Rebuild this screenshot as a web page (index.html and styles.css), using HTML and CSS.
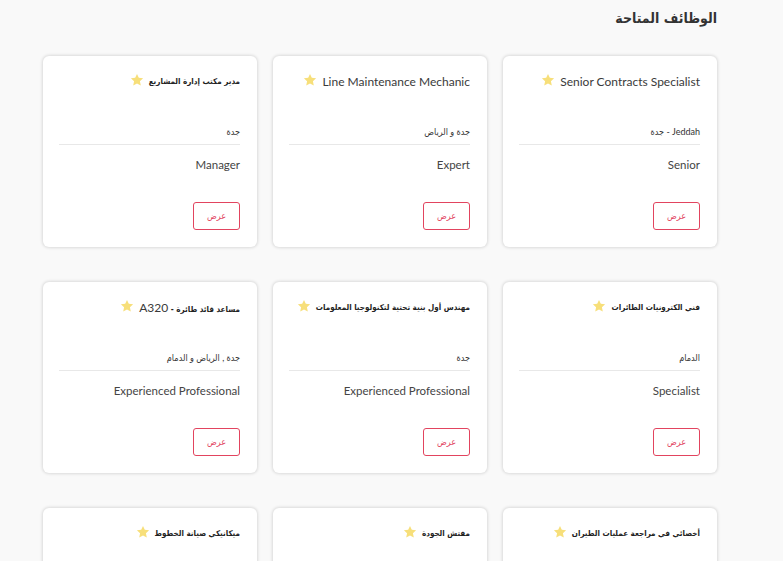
FILE: index.html
```html
<!DOCTYPE html>
<html lang="ar" dir="rtl">
<head>
    <meta charset="utf-8">
    <title>الوظائف المتاحة</title>
    <link rel="stylesheet" href="styles.css">
</head>
<body>
    <div class="jobs-container">
        <h2 class="jobs-title">الوظائف المتاحة</h2>

        <div class="jobs-grid">
            <div class="job-card">
                <div class="job-name"><span>Senior Contracts Specialist</span> <svg class="star" viewBox="0 0 24 24"><polygon points="12,1.5 15.1,8.3 22.5,9.1 17,14.1 18.5,21.5 12,17.8 5.5,21.5 7,14.1 1.5,9.1 8.9,8.3"/></svg></div>
                <div class="job-location">Jeddah - جدة</div>
                <div class="job-level">Senior</div>
                <a href="#" class="view-button">عرض</a>
            </div>
            <div class="job-card">
                <div class="job-name"><span>Line Maintenance Mechanic</span> <svg class="star" viewBox="0 0 24 24"><polygon points="12,1.5 15.1,8.3 22.5,9.1 17,14.1 18.5,21.5 12,17.8 5.5,21.5 7,14.1 1.5,9.1 8.9,8.3"/></svg></div>
                <div class="job-location">جدة و الرياض</div>
                <div class="job-level">Expert</div>
                <a href="#" class="view-button">عرض</a>
            </div>
            <div class="job-card">
                <div class="job-name ar"><span>مدير مكتب إدارة المشاريع</span> <svg class="star" viewBox="0 0 24 24"><polygon points="12,1.5 15.1,8.3 22.5,9.1 17,14.1 18.5,21.5 12,17.8 5.5,21.5 7,14.1 1.5,9.1 8.9,8.3"/></svg></div>
                <div class="job-location">جدة</div>
                <div class="job-level">Manager</div>
                <a href="#" class="view-button">عرض</a>
            </div>

            <div class="job-card">
                <div class="job-name ar"><span>فني الكترونيات الطائرات</span> <svg class="star" viewBox="0 0 24 24"><polygon points="12,1.5 15.1,8.3 22.5,9.1 17,14.1 18.5,21.5 12,17.8 5.5,21.5 7,14.1 1.5,9.1 8.9,8.3"/></svg></div>
                <div class="job-location">الدمام</div>
                <div class="job-level">Specialist</div>
                <a href="#" class="view-button">عرض</a>
            </div>
            <div class="job-card">
                <div class="job-name ar"><span>مهندس أول بنية تحتية لتكنولوجيا المعلومات</span> <svg class="star" viewBox="0 0 24 24"><polygon points="12,1.5 15.1,8.3 22.5,9.1 17,14.1 18.5,21.5 12,17.8 5.5,21.5 7,14.1 1.5,9.1 8.9,8.3"/></svg></div>
                <div class="job-location">جدة</div>
                <div class="job-level">Experienced Professional</div>
                <a href="#" class="view-button">عرض</a>
            </div>
            <div class="job-card">
                <div class="job-name ar"><span>مساعد قائد طائرة - <span class="latin">A320</span></span> <svg class="star" viewBox="0 0 24 24"><polygon points="12,1.5 15.1,8.3 22.5,9.1 17,14.1 18.5,21.5 12,17.8 5.5,21.5 7,14.1 1.5,9.1 8.9,8.3"/></svg></div>
                <div class="job-location">جدة , الرياض و الدمام</div>
                <div class="job-level">Experienced Professional</div>
                <a href="#" class="view-button">عرض</a>
            </div>

            <div class="job-card">
                <div class="job-name ar"><span>أخصائي في مراجعة عمليات الطيران</span> <svg class="star" viewBox="0 0 24 24"><polygon points="12,1.5 15.1,8.3 22.5,9.1 17,14.1 18.5,21.5 12,17.8 5.5,21.5 7,14.1 1.5,9.1 8.9,8.3"/></svg></div>
                <div class="job-location">جدة</div>
                <div class="job-level">Specialist</div>
                <a href="#" class="view-button">عرض</a>
            </div>
            <div class="job-card">
                <div class="job-name ar"><span>مفتش الجودة</span> <svg class="star" viewBox="0 0 24 24"><polygon points="12,1.5 15.1,8.3 22.5,9.1 17,14.1 18.5,21.5 12,17.8 5.5,21.5 7,14.1 1.5,9.1 8.9,8.3"/></svg></div>
                <div class="job-location">جدة</div>
                <div class="job-level">Expert</div>
                <a href="#" class="view-button">عرض</a>
            </div>
            <div class="job-card">
                <div class="job-name ar"><span>ميكانيكي صيانة الخطوط</span> <svg class="star" viewBox="0 0 24 24"><polygon points="12,1.5 15.1,8.3 22.5,9.1 17,14.1 18.5,21.5 12,17.8 5.5,21.5 7,14.1 1.5,9.1 8.9,8.3"/></svg></div>
                <div class="job-location">جدة و الرياض</div>
                <div class="job-level">Expert</div>
                <a href="#" class="view-button">عرض</a>
            </div>
        </div>
    </div>
</body>
</html>
```

FILE: styles.css
```css
body {
    margin: 0;
    font-family: "Lato", "DejaVu Sans Condensed", "DejaVu Sans", sans-serif;
    background-color: #f9f9f9;
    color: #333;
}

.jobs-container {
    padding: 8px 66px 0 43px;
}

.jobs-title {
    margin: 0 0 28px 0;
    font-family: "DejaVu Sans Condensed", "DejaVu Sans", sans-serif;
    font-size: 14px;
    line-height: 20px;
    font-weight: bold;
    color: #333;
}

.jobs-grid {
    display: grid;
    grid-template-columns: repeat(3, minmax(0, 1fr));
    column-gap: 16px;
    row-gap: 35px;
}

.job-card {
    display: flex;
    flex-direction: column;
    align-items: flex-start;
    height: 191px;
    box-sizing: border-box;
    padding: 17px 17px 17px 16px;
    background-color: #fff;
    border-radius: 6px;
    box-shadow: 0 0 3px 1px rgba(0, 0, 0, 0.12);
}

.job-name {
    display: flex;
    align-items: center;
    gap: 5px;
    height: 16px;
    white-space: nowrap;
    font-size: 12px;
    color: #3a3a3a;
}

.job-name.ar {
    font-family: "DejaVu Sans Condensed", "DejaVu Sans", sans-serif;
    font-size: 8px;
    font-weight: bold;
    color: #222;
}

.job-name .latin {
    font-family: "Lato", sans-serif;
    font-size: 12px;
    font-weight: normal;
    color: #3a3a3a;
}

.star {
    width: 14px;
    height: 14px;
    margin-top: -3px;
    fill: #f7df7a;
}

.job-location {
    align-self: stretch;
    margin-top: 36px;
    padding-bottom: 5px;
    border-bottom: 1px solid #e8e8e8;
    font-size: 9px;
    line-height: 14px;
    color: #333;
}

.job-level {
    margin-top: 12px;
    font-size: 11.5px;
    line-height: 16px;
    color: #444;
}

.view-button {
    margin-top: 29px;
    width: 47px;
    height: 28px;
    box-sizing: border-box;
    border: 1px solid #e2445f;
    border-radius: 3px;
    color: #e2445f;
    font-size: 9px;
    line-height: 26px;
    text-align: center;
    text-decoration: none;
}
```
